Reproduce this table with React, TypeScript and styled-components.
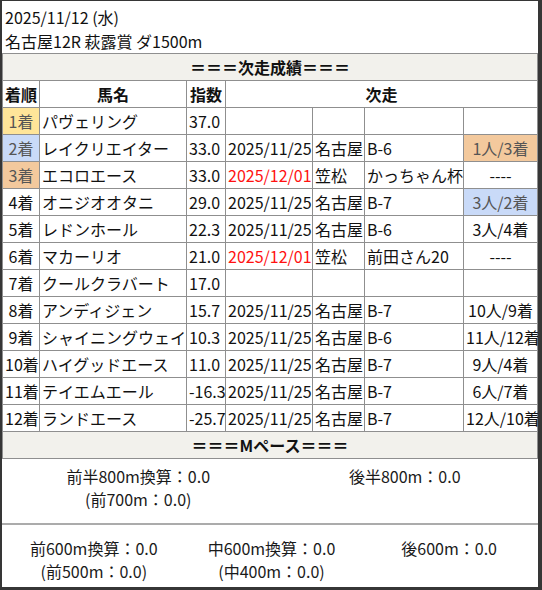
import styled, { createGlobalStyle } from "styled-components";

const GlobalStyle = createGlobalStyle`
  html, body {
    margin: 0;
    padding: 0;
    background: #fff;
  }
  body {
    font-family: "Noto Sans CJK JP", "Noto Sans", sans-serif;
    font-size: 16px;
    color: #111;
  }
`;

const Frame = styled.div`
  width: 542px;
  height: 590px;
  box-sizing: border-box;
  border-style: solid;
  border-color: #363636;
  border-width: 1px 4px 3px 2px;
  background: #fff;
  overflow: hidden;
`;

const Title = styled.div`
  padding: 4px 3px 0;
  line-height: 24px;
`;

const Table = styled.table`
  width: 100%;
  border-collapse: collapse;
  table-layout: fixed;

  td,
  th {
    border: 1px solid #8f8f8f;
    height: 26px;
    padding: 0 2px;
    white-space: nowrap;
    overflow: visible;
    vertical-align: middle;
    line-height: 20px;
  }
`;

const Col = styled.col<{ $w?: number }>`
  width: ${(p) => (p.$w ? `${p.$w}px` : "auto")};
`;

const Banner = styled.th`
  background: #f2f1ec;
  font-weight: 700;
  text-align: center;
`;

const Head = styled.th`
  background: #fff;
  font-weight: 700;
  text-align: center;
`;

const Cell = styled.td<{ $bg?: string; $center?: boolean; $red?: boolean }>`
  background: ${(p) => p.$bg ?? "#fff"};
  color: ${(p) => (p.$red ? "#ff1111" : p.$bg ? "#555" : "#111")};
  text-align: ${(p) => (p.$center ? "center" : "left")};
`;

const PaceRow = styled.div<{ $cols: number; $top: number; $bottom: number }>`
  display: grid;
  grid-template-columns: repeat(${(p) => p.$cols}, 1fr);
  padding: ${(p) => p.$top}px 0 ${(p) => p.$bottom}px 3px;
  line-height: 23px;
  color: #1a1a1a;
  text-align: center;
`;

const Divider = styled.div`
  height: 0;
  border-top: 2px solid #ababab;
`;

const YELLOW = "#ffe599";
const BLUE = "#c9daf8";
const TAN = "#f3c99d";

type Row = {
  rank: string;
  name: string;
  index: string;
  date?: string;
  red?: boolean;
  venue?: string;
  race?: string;
  result?: string;
  rankBg?: string;
  resBg?: string;
};

const rows: Row[] = [
  { rank: "1着", name: "パヴェリング", index: "37.0", rankBg: YELLOW },
  { rank: "2着", name: "レイクリエイター", index: "33.0", date: "2025/11/25", venue: "名古屋", race: "B-6", result: "1人/3着", rankBg: BLUE, resBg: TAN },
  { rank: "3着", name: "エコロエース", index: "33.0", date: "2025/12/01", red: true, venue: "笠松", race: "かっちゃん杯", result: "----", rankBg: TAN },
  { rank: "4着", name: "オニジオオタニ", index: "29.0", date: "2025/11/25", venue: "名古屋", race: "B-7", result: "3人/2着", resBg: BLUE },
  { rank: "5着", name: "レドンホール", index: "22.3", date: "2025/11/25", venue: "名古屋", race: "B-6", result: "3人/4着" },
  { rank: "6着", name: "マカーリオ", index: "21.0", date: "2025/12/01", red: true, venue: "笠松", race: "前田さん20", result: "----" },
  { rank: "7着", name: "クールクラバート", index: "17.0" },
  { rank: "8着", name: "アンディジェン", index: "15.7", date: "2025/11/25", venue: "名古屋", race: "B-7", result: "10人/9着" },
  { rank: "9着", name: "シャイニングウェイ", index: "10.3", date: "2025/11/25", venue: "名古屋", race: "B-6", result: "11人/12着" },
  { rank: "10着", name: "ハイグッドエース", index: "11.0", date: "2025/11/25", venue: "名古屋", race: "B-7", result: "9人/4着" },
  { rank: "11着", name: "テイエムエール", index: "-16.3", date: "2025/11/25", venue: "名古屋", race: "B-7", result: "6人/7着" },
  { rank: "12着", name: "ランドエース", index: "-25.7", date: "2025/11/25", venue: "名古屋", race: "B-7", result: "12人/10着" },
];

// last column takes what is left
const widths = [37, 147, 39, 87, 52, 99, 0];

export default function App() {
  return (
    <>
      <GlobalStyle />
      <Frame>
        <Title>
          <div>2025/11/12 (水)</div>
          <div>名古屋12R 萩露賞 ダ1500m</div>
        </Title>
        <Table>
          <colgroup>
            {widths.map((w, i) => (
              <Col key={i} $w={w} />
            ))}
          </colgroup>
          <tbody>
            <tr>
              <Banner colSpan={7}>＝＝＝次走成績＝＝＝</Banner>
            </tr>
            <tr>
              <Head>着順</Head>
              <Head>馬名</Head>
              <Head>指数</Head>
              <Head colSpan={4}>次走</Head>
            </tr>
            {rows.map((r) => (
              <tr key={r.rank}>
                <Cell $center $bg={r.rankBg}>{r.rank}</Cell>
                <Cell>{r.name}</Cell>
                <Cell>{r.index}</Cell>
                <Cell $red={r.red}>{r.date}</Cell>
                <Cell>{r.venue}</Cell>
                <Cell>{r.race}</Cell>
                <Cell $center $bg={r.resBg}>{r.result}</Cell>
              </tr>
            ))}
            <tr>
              <Banner colSpan={7}>＝＝＝Mペース＝＝＝</Banner>
            </tr>
          </tbody>
        </Table>
        <PaceRow $cols={2} $top={6} $bottom={12}>
          <div>
            <div>前半800m換算：0.0</div>
            <div>(前700m：0.0)</div>
          </div>
          <div>
            <div>後半800m：0.0</div>
          </div>
        </PaceRow>
        <Divider />
        <PaceRow $cols={3} $top={12} $bottom={3}>
          <div>
            <div>前600m換算：0.0</div>
            <div>(前500m：0.0)</div>
          </div>
          <div>
            <div>中600m換算：0.0</div>
            <div>(中400m：0.0)</div>
          </div>
          <div>
            <div>後600m：0.0</div>
          </div>
        </PaceRow>
      </Frame>
    </>
  );
}
